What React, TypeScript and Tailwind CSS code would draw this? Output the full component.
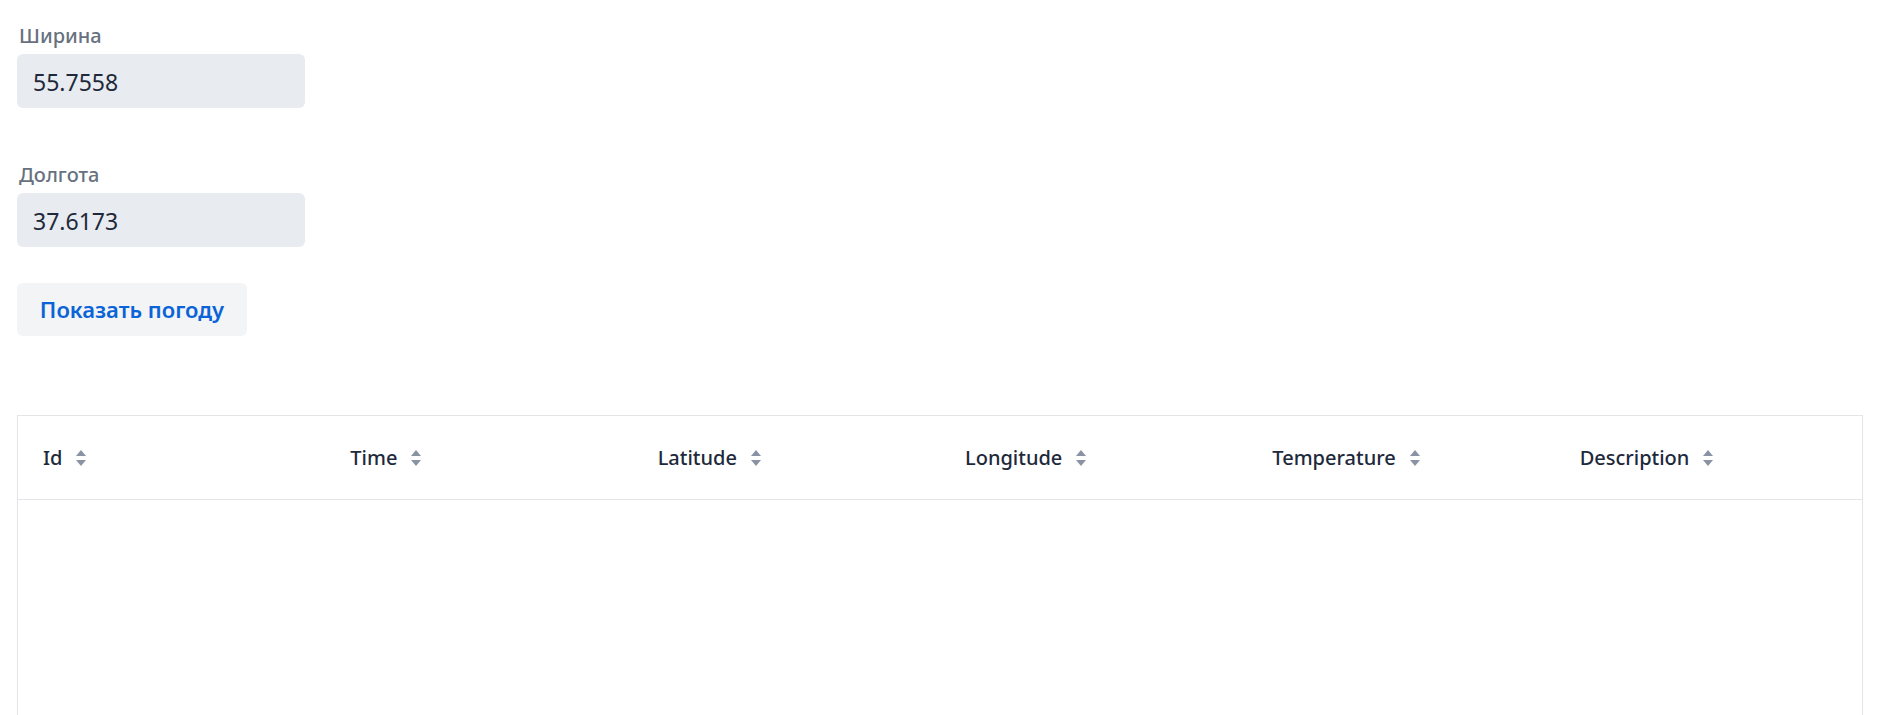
import React from "react";

const font = { fontFamily: '"Noto Sans", "Open Sans", sans-serif' };

function SortIcon() {
  return (
    <svg width="10" height="16" viewBox="0 0 10 16" className="shrink-0">
      <path d="M5 0 L10 6 L0 6 Z" fill="#8a93a3" />
      <path d="M5 16 L10 10 L0 10 Z" fill="#8a93a3" />
    </svg>
  );
}

function Field({ label, value }: { label: string; value: string }) {
  return (
    <div className="flex flex-col">
      <div className="text-[20px] leading-[24px] font-medium text-[#67717f] pl-[2px]">{label}</div>
      <div className="mt-[6px] w-[288px] h-[54px] rounded-[6px] bg-[#e8ebef] flex items-center pl-[16px] pt-[2px] text-[23px] text-[#1e293b]">
        {value}
      </div>
    </div>
  );
}

export default function App() {
  const cols = ["Id", "Time", "Latitude", "Longitude", "Temperature", "Description"];
  return (
    <div className="min-h-[715px] bg-white pl-[17px] pr-[14px] pt-[24px]" style={font}>
      <Field label="Ширина" value="55.7558" />
      <div className="h-[55px]" />
      <Field label="Долгота" value="37.6173" />
      <button className="mt-[36px] w-[230px] h-[53px] rounded-[6px] bg-[#f2f4f6] text-[#0b63d8] text-[22px] font-semibold flex items-center justify-center">
        Показать погоду
      </button>
      <div className="mt-[79px] border border-[#e3e5e8]">
        <div className="grid grid-cols-6 h-[84px] border-b border-[#e3e5e8]">
          {cols.map((c) => (
            <div key={c} className="flex items-center pl-[25px] gap-[14px] text-[20px] font-medium text-[#1e293b]">
              <span>{c}</span>
              <SortIcon />
            </div>
          ))}
        </div>
        <div className="h-[300px]" />
      </div>
    </div>
  );
}
